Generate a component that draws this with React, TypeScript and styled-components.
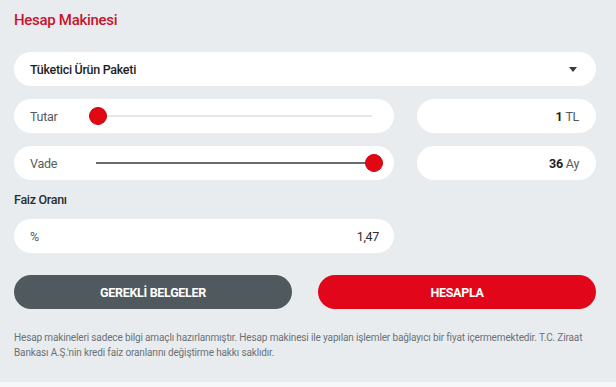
import styled, { createGlobalStyle } from "styled-components";

const GlobalStyle = createGlobalStyle`
  body {
    margin: 0;
    background: #f6f7f8;
    font-family: Roboto, "Liberation Sans", sans-serif;
  }
`;

const sliders = [
  { id: "tutar", label: "Tutar", percent: 0, value: "1", unit: "TL" },
  { id: "vade", label: "Vade", percent: 100, value: "36", unit: "Ay" },
];

const App = () => {
  return (
    <>
      <GlobalStyle />
      <Panel>
        <Title>Hesap Makinesi</Title>
        <Form>
          <Select>
            <SelectText>Tüketici Ürün Paketi</SelectText>
            <Caret />
          </Select>
          {sliders.map(({ id, label, percent, value, unit }) => (
            <Row key={id}>
              <Field>
                <Label>{label}</Label>
                <Slider>
                  <Track>
                    <Fill style={{ width: `${percent}%` }} />
                  </Track>
                  <Thumb style={{ left: `calc(${percent / 100} * (100% - 18px))` }} />
                </Slider>
              </Field>
              <ValueBox>
                <Strong>{value}</Strong>
                <Unit>{unit}</Unit>
              </ValueBox>
            </Row>
          ))}
        </Form>
        <SectionLabel>Faiz Oranı</SectionLabel>
        <Row>
          <RateBox>
            <Label>%</Label>
            <RateValue>1,47</RateValue>
          </RateBox>
        </Row>
        <Buttons>
          <Button variant="dark">GEREKLİ BELGELER</Button>
          <Button variant="red">HESAPLA</Button>
        </Buttons>
        <Disclaimer>
          Hesap makineleri sadece bilgi amaçlı hazırlanmıştır. Hesap makinesi ile
          yapılan işlemler bağlayıcı bir fiyat içermemektedir. T.C. Ziraat
          <br />
          Bankası A.Ş.'nin kredi faiz oranlarını değiştirme hakkı saklıdır.
        </Disclaimer>
      </Panel>
    </>
  );
};

const Panel = styled.div`
  background: #e9ecee;
  padding: 11px 20px 21px 14px;
  height: 350px;
`;

const Title = styled.h2`
  margin: 0;
  font-size: 15px;
  line-height: 18px;
  font-weight: 500;
  color: #c8142f;
  letter-spacing: -0.3px;
`;

const Form = styled.div`
  display: flex;
  flex-direction: column;
  gap: 13px;
  margin-top: 23px;
`;

const Pill = styled.div`
  height: 34px;
  box-sizing: border-box;
  background: #fff;
  border-radius: 17px;
  display: flex;
  align-items: center;
`;

const Select = styled(Pill)`
  padding: 0 19px 0 16px;
  justify-content: space-between;
`;

const SelectText = styled.span`
  font-size: 12.5px;
  font-weight: 500;
  color: #1e1e1e;
  letter-spacing: -0.3px;
`;

const Caret = styled.span`
  width: 0;
  height: 0;
  border-left: 4.5px solid transparent;
  border-right: 4.5px solid transparent;
  border-top: 5px solid #3a3a3a;
`;

const Row = styled.div`
  display: grid;
  grid-template-columns: 380px 179px;
  column-gap: 23px;
`;

const Field = styled(Pill)`
  padding: 0 11px 0 16px;
`;

const Label = styled.span`
  width: 59px;
  flex-shrink: 0;
  font-size: 12.5px;
  color: #555b60;
  letter-spacing: -0.3px;
`;

const Slider = styled.div`
  position: relative;
  flex: 1;
  height: 18px;
`;

const Track = styled.div`
  position: absolute;
  left: 7px;
  right: 11px;
  top: 8px;
  height: 2px;
  background: #e6e9eb;
`;

const Fill = styled.div`
  height: 100%;
  background: #6a6d70;
`;

const Thumb = styled.div`
  position: absolute;
  top: 0;
  width: 18px;
  height: 18px;
  box-sizing: border-box;
  border-radius: 50%;
  background: #e30613;
  border: 1px solid #c9050f;
`;

const ValueBox = styled(Pill)`
  justify-content: flex-end;
  padding-right: 17px;
  font-size: 12.5px;
  gap: 3px;
`;

const Strong = styled.span`
  font-weight: 700;
  color: #1e1e1e;
  letter-spacing: -0.3px;
`;

const Unit = styled.span`
  color: #555b60;
  letter-spacing: -0.3px;
`;

const SectionLabel = styled.div`
  margin-top: 12px;
  margin-bottom: 11px;
  font-size: 12.5px;
  line-height: 16px;
  font-weight: 500;
  color: #2a2e31;
  letter-spacing: -0.3px;
`;

const RateBox = styled(Pill)`
  padding: 0 15px 0 16px;
  justify-content: space-between;
`;

const RateValue = styled.span`
  font-size: 12.5px;
  color: #2a2e31;
  letter-spacing: -0.3px;
`;

const Buttons = styled.div`
  display: grid;
  grid-template-columns: 278px 278px;
  column-gap: 26px;
  margin-top: 22px;
`;

const Button = styled.button<{ variant: "dark" | "red" }>`
  height: 34px;
  border: none;
  border-radius: 17px;
  background: ${({ variant }) => (variant === "red" ? "#e1061a" : "#4f595e")};
  color: #fff;
  font-family: Roboto, "Liberation Sans", sans-serif;
  font-size: 12.5px;
  font-weight: 700;
  letter-spacing: -0.3px;
  cursor: pointer;
`;

const Disclaimer = styled.p`
  margin: 21px 0 0;
  font-size: 10px;
  line-height: 15px;
  color: #6b7176;
  letter-spacing: -0.14px;
  white-space: nowrap;
`;

export default App;
